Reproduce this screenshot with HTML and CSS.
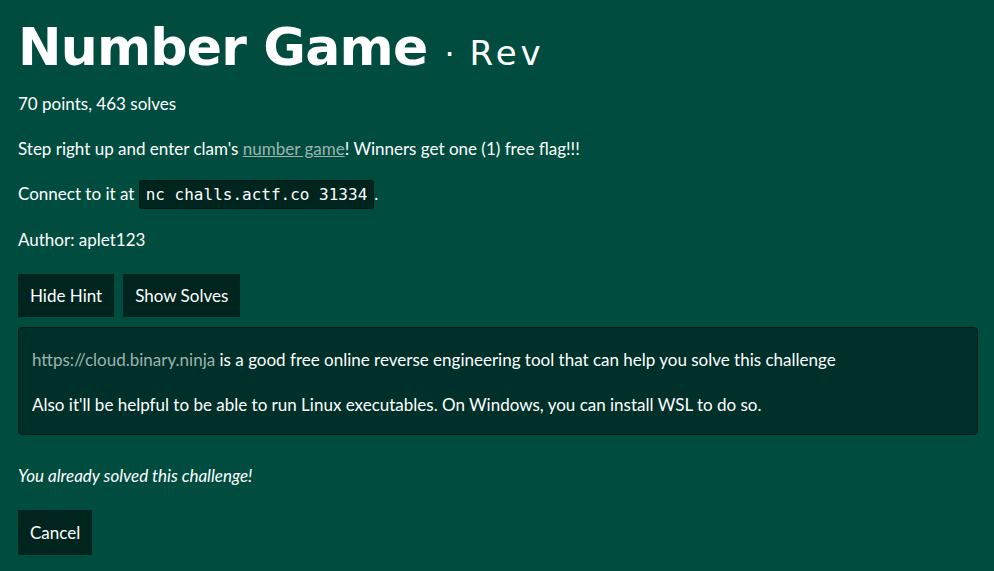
FILE: index.html
```html
<!DOCTYPE html>
<html>
<head>
<meta charset="utf-8">
<link rel="stylesheet" href="styles.css">
</head>
<body>
<main class="challenge">
  <h1 class="title"><span class="name">Number Game</span><span class="dot">·</span><span class="cat">Rev</span></h1>
  <p class="meta">70 points, 463 solves</p>
  <p>Step right up and enter clam's <a href="#" class="link">number game</a>! Winners get one (1) free flag!!!</p>
  <p>Connect to it at <code class="code">nc challs.actf.co 31334</code>.</p>
  <p>Author: aplet123</p>
  <div class="actions">
    <button class="btn">Hide Hint</button>
    <button class="btn">Show Solves</button>
  </div>
  <div class="hint">
    <p><a href="#" class="hint-link">https://cloud.binary.ninja</a> is a good free online reverse engineering tool that can help you solve this challenge</p>
    <p>Also it'll be helpful to be able to run Linux executables. On Windows, you can install WSL to do so.</p>
  </div>
  <p class="solved">You already solved this challenge!</p>
  <button class="btn cancel">Cancel</button>
</main>
</body>
</html>
```

FILE: styles.css
```css
html, body {
  margin: 0;
  padding: 0;
  background: #004d40;
  color: #ffffff;
  font-family: Lato, "Open Sans", sans-serif;
  font-size: 17px;
}
.challenge {
  padding: 15px 16px 0 18px;
}
.title {
  margin: 0 0 12px;
  font-family: "DejaVu Sans", sans-serif;
  font-weight: bold;
  line-height: 64px;
  height: 64px;
  white-space: nowrap;
}
.name {
  font-size: 52px;
  letter-spacing: -0.8px;
}
.dot {
  font-size: 32px;
  font-weight: normal;
  margin: 0 15px 0 17px;
}
.cat {
  font-size: 34px;
  font-weight: normal;
  letter-spacing: 4px;
}
p {
  margin: 0 0 20px;
  line-height: 25px;
}
.link {
  color: #9fb3ad;
  text-decoration: underline;
}
.code {
  font-family: "DejaVu Sans Mono", monospace;
  font-size: 16px;
  background: #00251e;
  border: 1px solid #001812;
  border-radius: 3px;
  padding: 4px 6px;
}
.actions {
  display: flex;
  gap: 9px;
  margin-top: 22px;
  margin-bottom: 10px;
}
.btn {
  background: #00251e;
  color: #fff;
  border: none;
  font-family: Lato, sans-serif;
  font-size: 17px;
  height: 43px;
  padding: 0 12px;
  cursor: pointer;
}
.hint {
  background: #00302a;
  border: 1px solid #001c16;
  border-radius: 4px;
  padding: 19px 13px 17px;
  margin-bottom: 28px;
}
.hint p:last-child { margin-bottom: 0; }
.hint-link { color: #9fb3ad; text-decoration: none; }
.solved {
  font-style: italic;
  margin-bottom: 22px;
}
.cancel { height: 45px; }
```
